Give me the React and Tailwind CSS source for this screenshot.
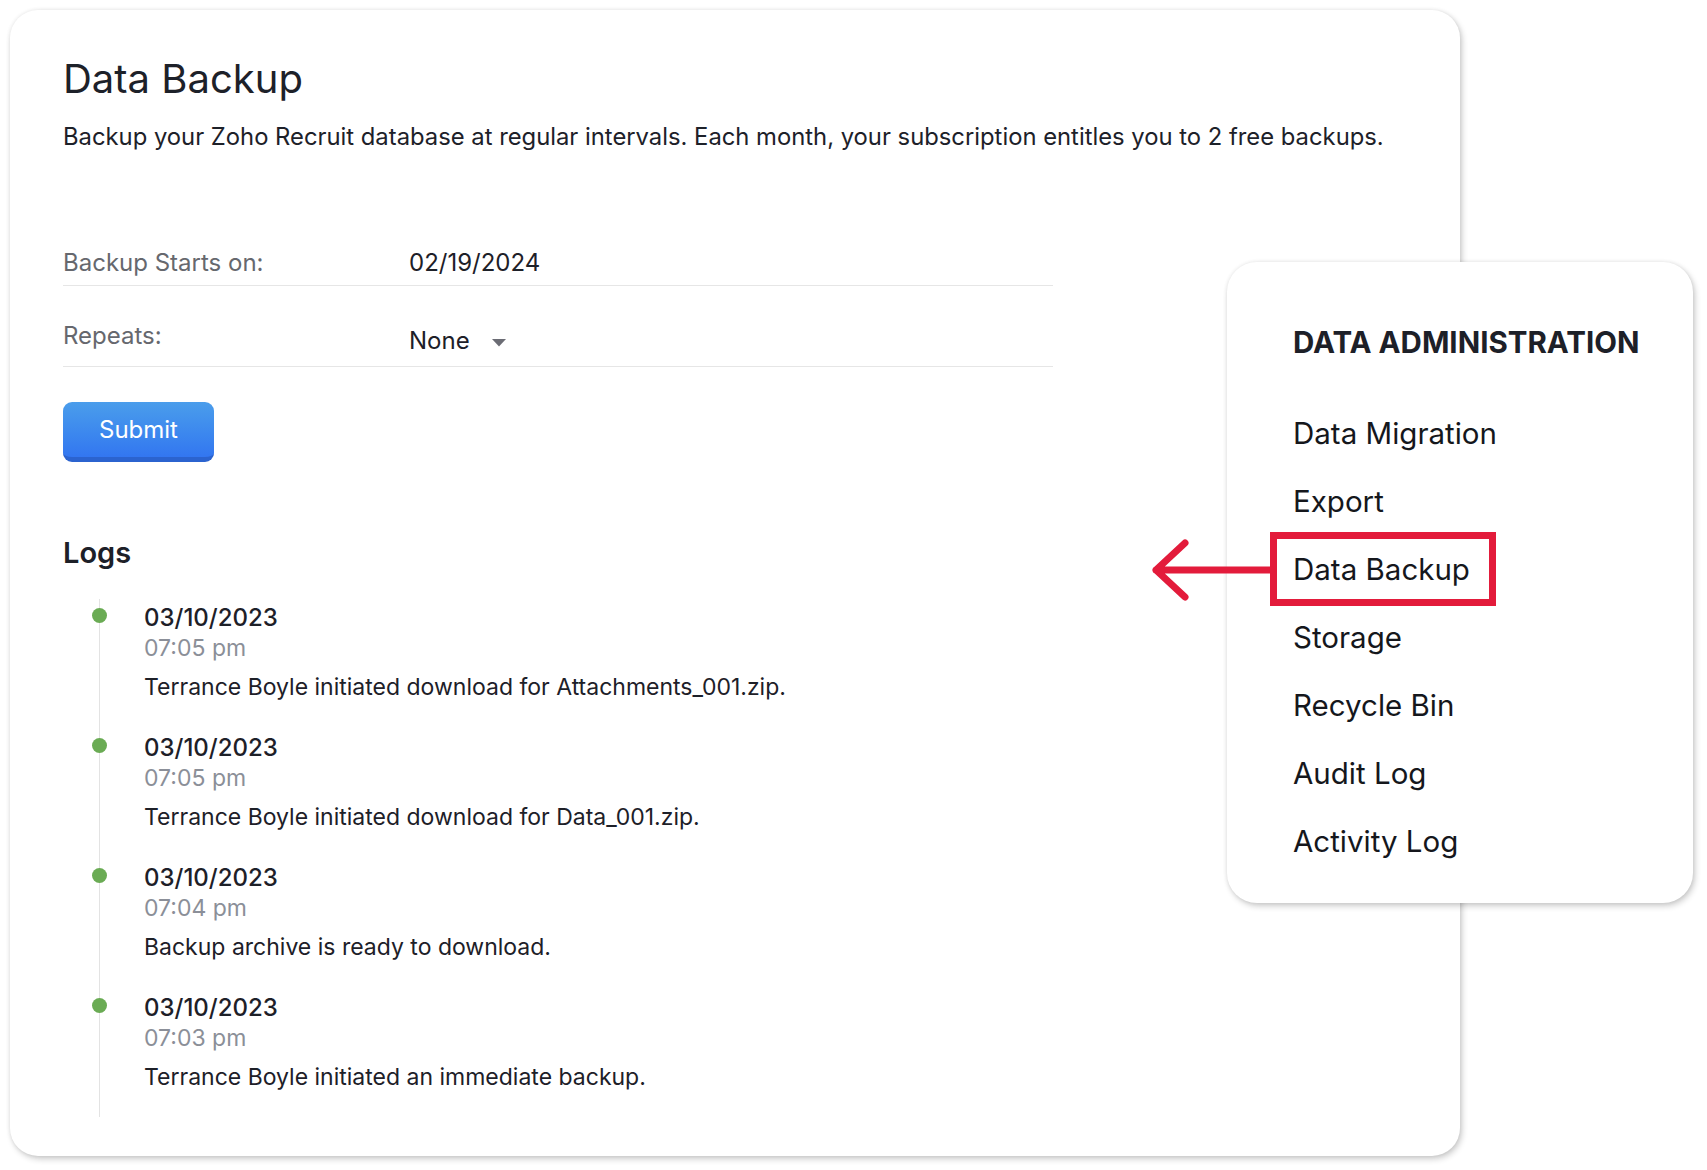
import React from "react";

const logs = [
  { date: "03/10/2023", time: "07:05 pm", text: "Terrance Boyle initiated download for Attachments_001.zip." },
  { date: "03/10/2023", time: "07:05 pm", text: "Terrance Boyle initiated download for Data_001.zip." },
  { date: "03/10/2023", time: "07:04 pm", text: "Backup archive is ready to download." },
  { date: "03/10/2023", time: "07:03 pm", text: "Terrance Boyle initiated an immediate backup." },
];

const menu = ["Data Migration", "Export", "Data Backup", "Storage", "Recycle Bin", "Audit Log", "Activity Log"];

function LogItem({ log }) {
  return (
    <li className="relative pl-[44px]">
      <span className="absolute left-[-8px] top-[6px] w-[15px] h-[15px] rounded-full bg-[#6aab54]" />
      <div className="text-[24px] leading-[31px] font-medium text-[#1d2028]">{log.date}</div>
      <div className="text-[23px] leading-[30px] text-[#8b8f98]">{log.time}</div>
      <div className="mt-[9px] text-[23px] leading-[30px] text-[#1d2028]">{log.text}</div>
    </li>
  );
}

export default function App() {
  return (
    <div className="relative w-[1707px] h-[1170px] bg-white pl-[10px] pt-[10px] font-['Inter',sans-serif]">
      {/* Main card */}
      <div className="w-[1450px] h-[1146px] bg-white rounded-[28px] shadow-[0_0_4px_rgba(0,0,0,0.08),2px_3px_6px_rgba(0,0,0,0.2)] pl-[53px] pt-[44px]">
        <h1 className="text-[40px] leading-[50px] text-[#1d2129]">Data Backup</h1>
        <p className="mt-[18px] text-[23.8px] leading-[30px] text-[#1d2129]">
          Backup your Zoho Recruit database at regular intervals. Each month, your subscription entitles you to 2 free backups.
        </p>

        {/* Form */}
        <div className="w-[990px] mt-[96px]">
          <div className="flex items-start pb-[7px] border-b border-[#e6e6e6]">
            <span className="w-[346px] text-[24px] leading-[30px] text-[#66686e]">Backup Starts on:</span>
            <span className="text-[24px] leading-[30px] text-[#1d2028]">02/19/2024</span>
          </div>
          <div className="flex items-start pt-[35px] pb-[10px] border-b border-[#e6e6e6]">
            <span className="w-[346px] text-[24px] leading-[30px] text-[#66686e]">Repeats:</span>
            <span className="mt-[5px] flex items-center text-[24px] leading-[30px] text-[#1d2028]">
              None
              <svg className="ml-[22px] mt-[4px]" width="14" height="8" viewBox="0 0 14 8">
                <path d="M0 0 L14 0 L7 7.5 Z" fill="#6b6c74" />
              </svg>
            </span>
          </div>
        </div>

        <button className="mt-[35px] w-[151px] h-[60px] rounded-[9px] bg-gradient-to-b from-[#4b9deb] to-[#3376f0] border-b-[5px] border-[#2b63cf] text-white text-[24px] leading-[30px]">
          Submit
        </button>

        {/* Logs */}
        <h2 className="mt-[73px] text-[29px] leading-[36px] font-semibold text-[#1d2028]">Logs</h2>
        <ul className="mt-[28px] ml-[36px] border-l border-[#e3e3e3] pt-[3px] pb-[25px] flex flex-col gap-[30px]">
          {logs.map((log, i) => (
            <LogItem key={i} log={log} />
          ))}
        </ul>
      </div>

      {/* Data administration menu */}
      <div className="absolute left-[1227px] top-[262px] w-[466px] h-[641px] bg-white rounded-[30px] shadow-[0_0_4px_rgba(0,0,0,0.08),2px_3px_6px_rgba(0,0,0,0.2)] pl-[66px] pt-[62px]">
        <h3 className="text-[29.5px] leading-[36px] font-bold text-[#1d2028]">DATA ADMINISTRATION</h3>
        <ul className="mt-[39px]">
          {menu.map((m) => (
            <li key={m} className="relative h-[68px] text-[29.5px] leading-[68px] text-[#15171c]">
              {m === "Data Backup" && (
                <span className="absolute left-[-23px] top-[-3px] w-[226px] h-[74px] border-[7px] border-[#e31b3b]" />
              )}
              {m}
            </li>
          ))}
        </ul>
      </div>

      {/* Arrow pointing to the highlighted item */}
      <svg className="absolute left-[1150px] top-[538px]" width="125" height="64" viewBox="0 0 125 64">
        <path d="M6 32 L121 32 M35 5 L6 32 L35 59" fill="none" stroke="#e31b3b" strokeWidth="7" strokeLinecap="round" strokeLinejoin="round" />
      </svg>
    </div>
  );
}
